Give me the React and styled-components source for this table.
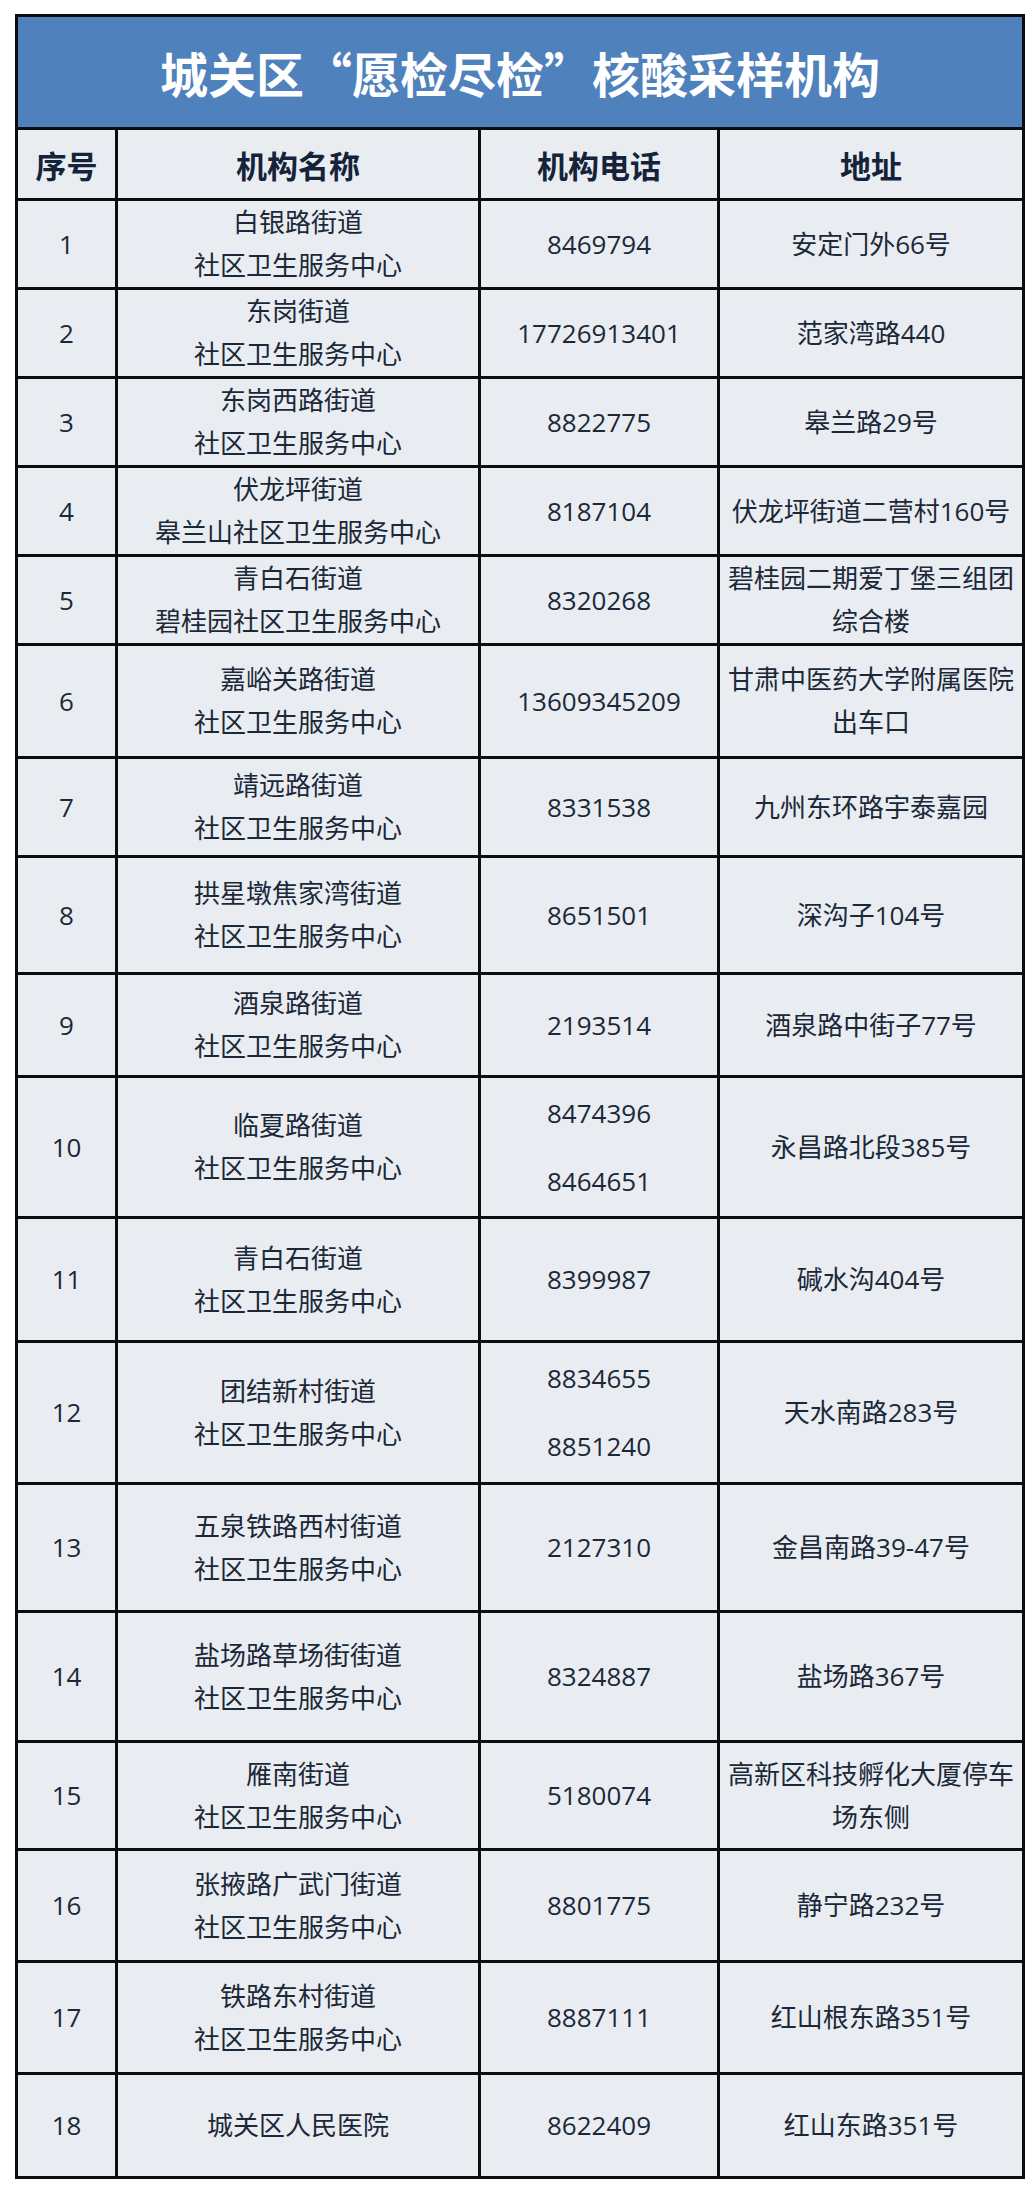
import styled, { createGlobalStyle } from "styled-components";

const GlobalStyle = createGlobalStyle`
  html, body { margin: 0; padding: 0; background: #ffffff; }
  body { font-family: "Open Sans", "Noto Sans CJK SC", sans-serif; }
`;

const Page = styled.div`
  padding: 14px 0 0 15px;
  width: 1036px;
  box-sizing: border-box;
`;

const Table = styled.table`
  width: 1007px;
  table-layout: fixed;
  border-collapse: collapse;
  border: 3px solid #0d0d0d;
  background: #e9edf2;
  color: #1b2838;
`;

const TitleCell = styled.th`
  height: 110px;
  padding: 0;
  background: #4f81bd;
  color: #ffffff;
  border: 3px solid #0d0d0d;
  font-family: "Noto Sans CJK SC", sans-serif;
  font-feature-settings: "fwid";
  font-size: 48px;
  font-weight: 700;
  text-align: center;
  vertical-align: middle;
`;

const HeadCell = styled.th`
  height: 68px;
  padding: 0;
  border: 3px solid #0d0d0d;
  font-family: "Noto Sans CJK SC", sans-serif;
  font-size: 31px;
  font-weight: 700;
  color: #15233a;
  text-align: center;
  vertical-align: middle;
`;

const Row = styled.tr`
  height: ${({ $h }) => $h}px;
`;

const Cell = styled.td`
  padding: 0 2px;
  border: 3px solid #0d0d0d;
  font-size: 26px;
  line-height: 43px;
  text-align: center;
  vertical-align: middle;
  white-space: nowrap;
`;

const Line = styled.span`
  display: block;
`;

const Phones = styled.div`
  display: flex;
  flex-direction: column;
  gap: 25px;
`;

const rows = [
  { h: 88, name: ["白银路街道", "社区卫生服务中心"], tel: ["8469794"], addr: ["安定门外66号"] },
  { h: 89, name: ["东岗街道", "社区卫生服务中心"], tel: ["17726913401"], addr: ["范家湾路440"] },
  { h: 87, name: ["东岗西路街道", "社区卫生服务中心"], tel: ["8822775"], addr: ["皋兰路29号"] },
  { h: 89, name: ["伏龙坪街道", "皋兰山社区卫生服务中心"], tel: ["8187104"], addr: ["伏龙坪街道二营村160号"] },
  { h: 87, name: ["青白石街道", "碧桂园社区卫生服务中心"], tel: ["8320268"], addr: ["碧桂园二期爱丁堡三组团", "综合楼"] },
  { h: 113, name: ["嘉峪关路街道", "社区卫生服务中心"], tel: ["13609345209"], addr: ["甘肃中医药大学附属医院", "出车口"] },
  { h: 99, name: ["靖远路街道", "社区卫生服务中心"], tel: ["8331538"], addr: ["九州东环路宇泰嘉园"] },
  { h: 117, name: ["拱星墩焦家湾街道", "社区卫生服务中心"], tel: ["8651501"], addr: ["深沟子104号"] },
  { h: 103, name: ["酒泉路街道", "社区卫生服务中心"], tel: ["2193514"], addr: ["酒泉路中街子77号"] },
  { h: 141, name: ["临夏路街道", "社区卫生服务中心"], tel: ["8474396", "8464651"], addr: ["永昌路北段385号"] },
  { h: 124, name: ["青白石街道", "社区卫生服务中心"], tel: ["8399987"], addr: ["碱水沟404号"] },
  { h: 142, name: ["团结新村街道", "社区卫生服务中心"], tel: ["8834655", "8851240"], addr: ["天水南路283号"] },
  { h: 128, name: ["五泉铁路西村街道", "社区卫生服务中心"], tel: ["2127310"], addr: ["金昌南路39-47号"] },
  { h: 130, name: ["盐场路草场街街道", "社区卫生服务中心"], tel: ["8324887"], addr: ["盐场路367号"] },
  { h: 108, name: ["雁南街道", "社区卫生服务中心"], tel: ["5180074"], addr: ["高新区科技孵化大厦停车", "场东侧"] },
  { h: 112, name: ["张掖路广武门街道", "社区卫生服务中心"], tel: ["8801775"], addr: ["静宁路232号"] },
  { h: 112, name: ["铁路东村街道", "社区卫生服务中心"], tel: ["8887111"], addr: ["红山根东路351号"] },
  { h: 104, name: ["城关区人民医院"], tel: ["8622409"], addr: ["红山东路351号"] },
];

const Lines = ({ items }) => items.map((t) => <Line key={t}>{t}</Line>);

export default function App() {
  return (
    <Page>
      <GlobalStyle />
      <Table>
        <colgroup>
          <col style={{ width: 100 }} />
          <col style={{ width: 363 }} />
          <col style={{ width: 239 }} />
          <col style={{ width: 305 }} />
        </colgroup>
        <thead>
          <tr>
            <TitleCell colSpan={4}>城关区“愿检尽检”核酸采样机构</TitleCell>
          </tr>
          <tr>
            <HeadCell>序号</HeadCell>
            <HeadCell>机构名称</HeadCell>
            <HeadCell>机构电话</HeadCell>
            <HeadCell>地址</HeadCell>
          </tr>
        </thead>
        <tbody>
          {rows.map((r, i) => (
            <Row key={i} $h={r.h}>
              <Cell>{i + 1}</Cell>
              <Cell><Lines items={r.name} /></Cell>
              <Cell>
                {r.tel.length > 1 ? (
                  <Phones><Lines items={r.tel} /></Phones>
                ) : (
                  r.tel[0]
                )}
              </Cell>
              <Cell><Lines items={r.addr} /></Cell>
            </Row>
          ))}
        </tbody>
      </Table>
    </Page>
  );
}
